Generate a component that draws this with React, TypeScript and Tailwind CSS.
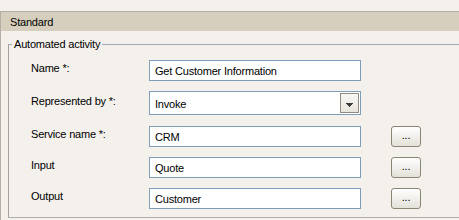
import React from "react";

interface FieldRowProps {
  label: string;
  value: string;
  browse?: boolean;
}

const FieldRow: React.FC<FieldRowProps> = ({ label, value, browse }) => (
  <div className="flex items-start h-[21px]">
    <div className="w-[118px] pt-[2px] leading-[13px]">{label}</div>
    <div className="w-[212px] h-[21px] border border-[#7f9db9] bg-white pl-[5px] flex items-center leading-[13px] pt-[1px]">
      {value}
    </div>
    {browse && (
      <button className="ml-[30px] w-[30px] h-[21px] rounded-[3px] border border-[#8a8574] bg-gradient-to-b from-white to-[#e4e1d8] flex items-center justify-center leading-[13px] text-[11px] pb-[3px]">
        ...
      </button>
    )}
  </div>
);

export default function App() {
  return (
    <div className="w-[459px] h-[220px] overflow-hidden bg-[#f4f1ec] pt-[11px] text-[11px] tracking-[-0.2px] text-black font-['Liberation_Sans',Arial,sans-serif]">
      <div className="h-[209px] border-t border-l border-[#b3afa7]">
        {/* Header */}
        <div className="h-[19px] bg-[#d6cfbe] pl-[9px] flex items-center leading-[13px] pt-[1px]">
          Standard
        </div>

        {/* Automated activity group */}
        <div className="pt-[7px] pl-[7px]">
          <fieldset className="w-[470px] h-[180px] border border-[#a4a8bc] border-l-[#a3a19b] border-b-[#b0aea8]">
            <legend className="ml-[3px] px-[2px] leading-[13px]">Automated activity</legend>
            <div className="pl-[22px] pt-[9px] flex flex-col">
              <FieldRow label="Name *:" value="Get Customer Information" />

              <div className="flex items-start h-[24px] mt-[10px]">
                <div className="w-[118px] pt-[4px] leading-[13px]">Represented by *:</div>
                <div className="w-[212px] h-[24px] border border-[#7f9db9] bg-white pl-[5px] flex items-center justify-between leading-[13px]">
                  <span className="pt-[3px]">Invoke</span>
                  <div className="mr-[1px] w-[19px] h-[20px] border border-[#8f8b80] bg-gradient-to-b from-[#f8f7f3] to-[#e8e5dc] flex items-center justify-center">
                    <svg width="7" height="4" viewBox="0 0 7 4" className="mt-[3px]">
                      <path d="M0 0h7v1H0zM1 1h5v1H1zM2 2h3v1H2zM3 3h1v1H3z" fill="#3c3a34" />
                    </svg>
                  </div>
                </div>
              </div>

              <div className="mt-[11px]">
                <FieldRow label="Service name *:" value="CRM" browse />
              </div>
              <div className="mt-[10px]">
                <FieldRow label="Input" value="Quote" browse />
              </div>
              <div className="mt-[10px]">
                <FieldRow label="Output" value="Customer" browse />
              </div>
            </div>
          </fieldset>
        </div>
      </div>
    </div>
  );
}
